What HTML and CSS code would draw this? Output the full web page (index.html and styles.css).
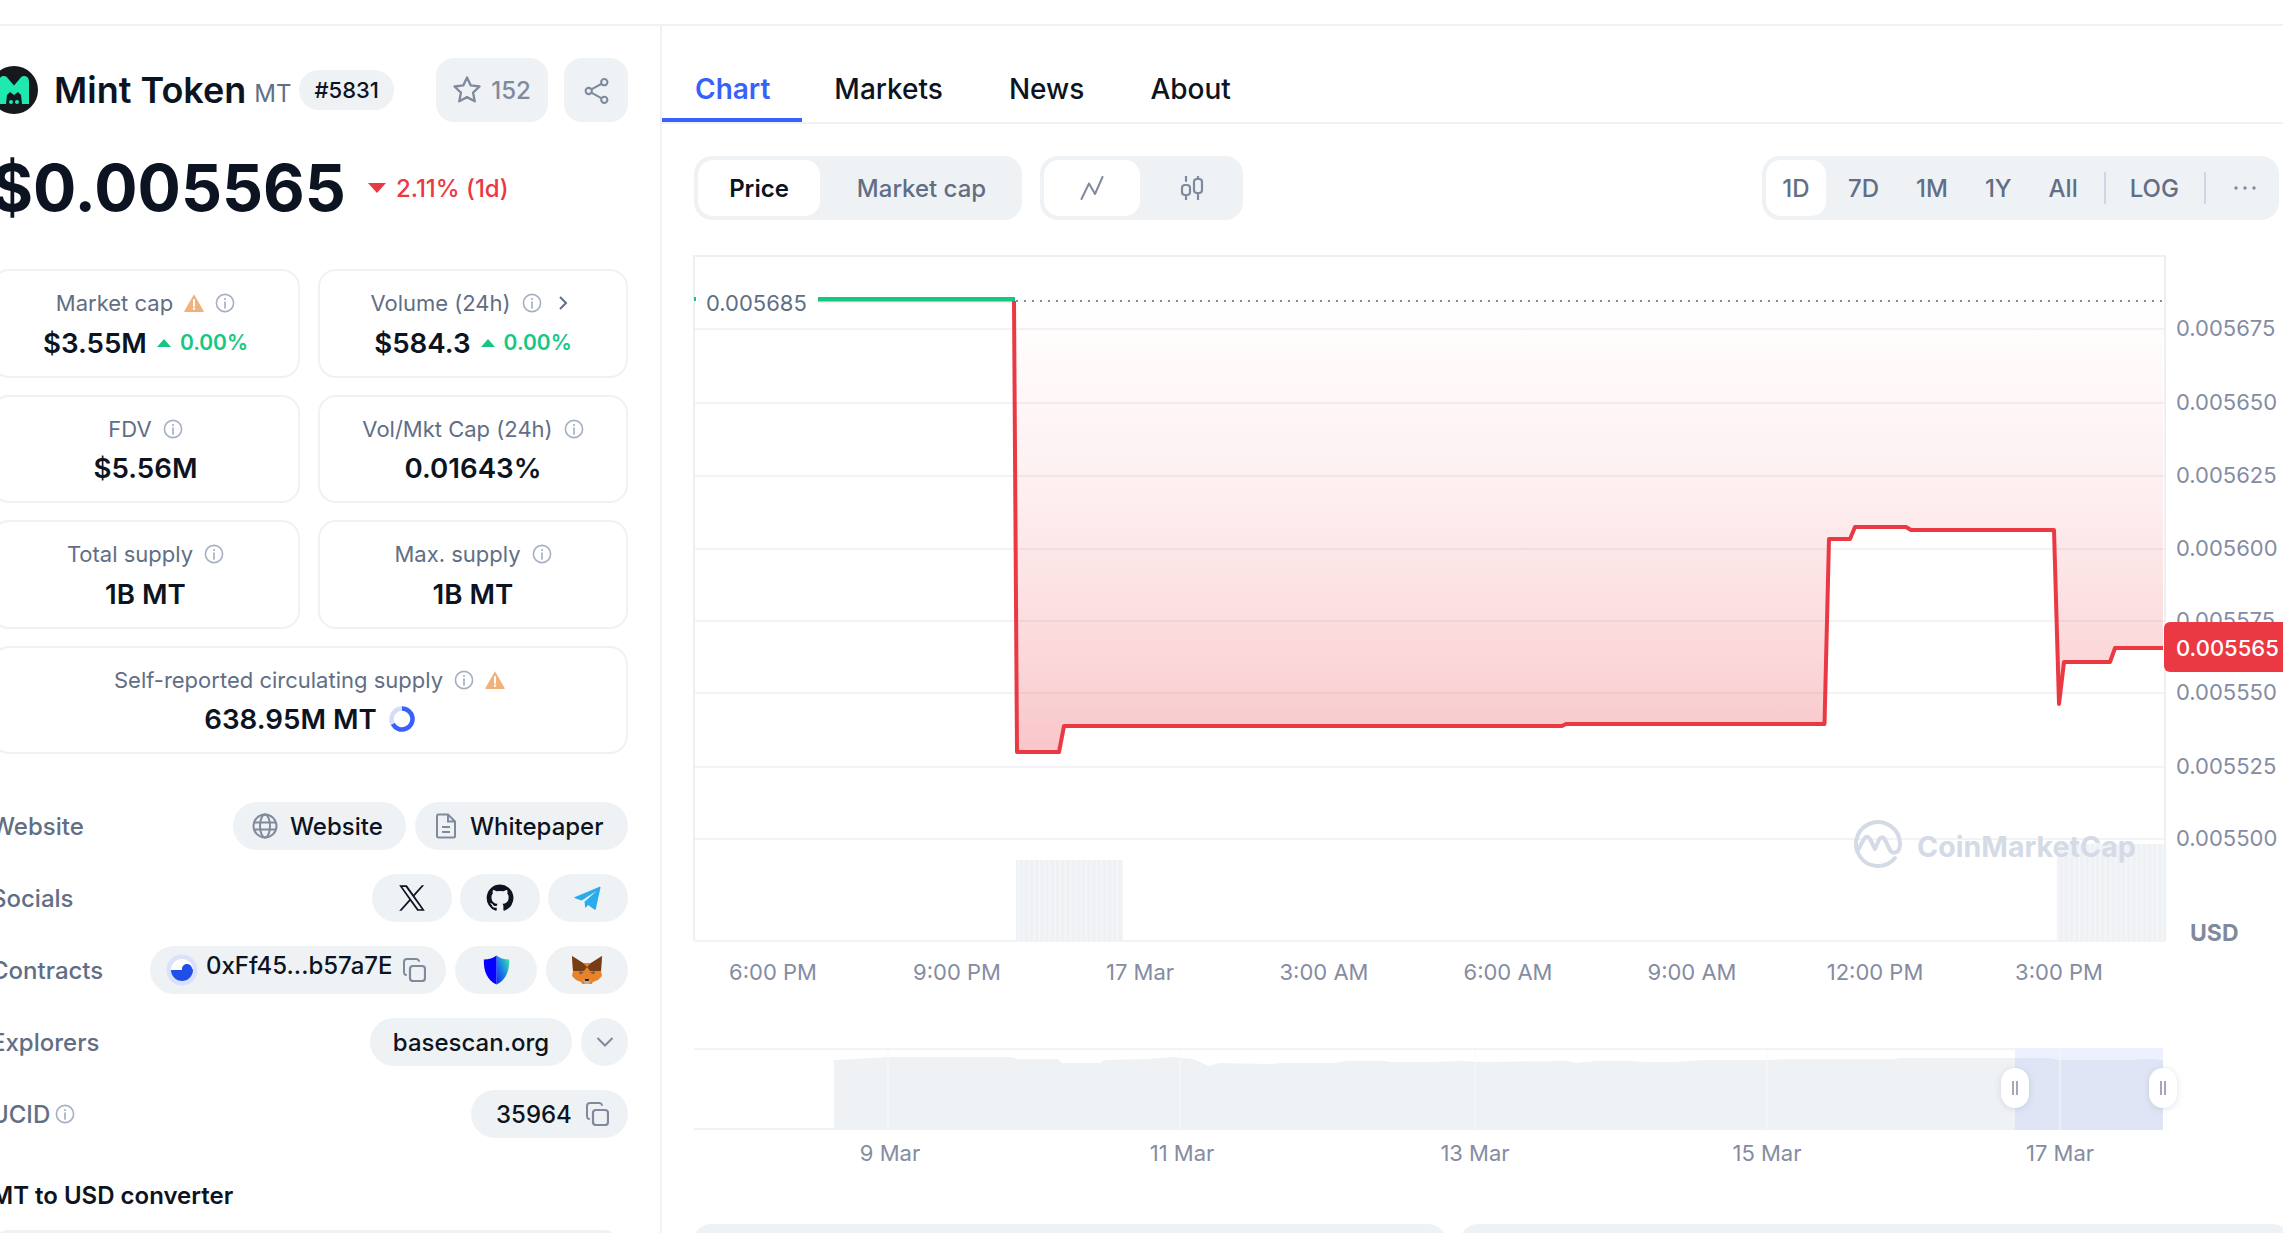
FILE: index.html
```html
<!DOCTYPE html>
<html lang="en">
<head>
<meta charset="utf-8">
<title>Mint Token</title>
<link rel="stylesheet" href="styles.css">
</head>
<body>
<svg class="defs" width="0" height="0" aria-hidden="true">
  <defs>
    <symbol id="i-info" viewBox="0 0 20 20"><circle cx="10" cy="10" r="8.6" fill="none" stroke="currentColor" stroke-width="1.6"/><circle cx="10" cy="6" r="1.1" fill="currentColor"/><path d="M10 9v6" stroke="currentColor" stroke-width="1.7" stroke-linecap="round"/></symbol>
    <symbol id="i-warn" viewBox="0 0 20 20"><path d="M10 1.2 19.6 18a.6.6 0 0 1-.5.9H.9a.6.6 0 0 1-.5-.9z" fill="#f0b27a"/><path d="M10 7v6" stroke="#fff" stroke-width="2" stroke-linecap="round"/><circle cx="10" cy="15.8" r="1.2" fill="#fff"/></symbol>
    <symbol id="i-copy" viewBox="0 0 24 24"><path d="M4 17a3 3 0 0 1-2-2.800V4a3 3 0 0 1 3-3h9a3 3 0 0 1 3 2" fill="none" stroke="currentColor" stroke-width="2" stroke-linecap="round"/><rect x="8" y="8" width="15" height="15" rx="3" fill="none" stroke="currentColor" stroke-width="2.200"/></symbol>
    <pattern id="stripes" width="5.200" height="10" patternUnits="userSpaceOnUse"><rect width="5.200" height="10" fill="#eff2f5"/><rect x="4" width="1.200" height="10" fill="#f5f7f9"/></pattern>
    <linearGradient id="redfill" gradientUnits="userSpaceOnUse" x1="0" y1="301" x2="0" y2="752"><stop offset="0" stop-color="#ea3943" stop-opacity="0"/><stop offset=".44" stop-color="#ea3943" stop-opacity=".085"/><stop offset=".71" stop-color="#ea3943" stop-opacity=".17"/><stop offset=".89" stop-color="#ea3943" stop-opacity=".24"/><stop offset="1" stop-color="#ea3943" stop-opacity=".29"/></linearGradient>
    <linearGradient id="shieldg" x1="1" y1="0" x2="0" y2="1"><stop offset=".05" stop-color="#3ae8a8"/><stop offset=".55" stop-color="#1a7be8"/><stop offset="1" stop-color="#0a2cf0"/></linearGradient>
  </defs>
</svg>

<div class="topbar"></div>
<div class="page">
  <aside class="side">
    <div class="side-inner">
      <header class="coin-head">
        <div class="coin-id">
          <svg class="coin-logo" viewBox="0 0 48 48"><circle cx="24" cy="24" r="24" fill="#15181c"/><path d="M9 16c0-4 2-6 5-6 2 0 3 1 4 2.600l6 7 6-7c1-1.600 2-2.600 4-2.600 3 0 5 2 5 6v22h-7l-1-9-3-3-4 3-4-3-3 3-1 9H9z" fill="#1de9b0"/><path d="M23 31h2.500v6H23zM18 33h2.500v5H18zM28 33h2.500v5H28z" fill="#15181c"/><circle cx="21" cy="36" r="2" fill="#1de9b0"/><circle cx="27" cy="36" r="2" fill="#1de9b0"/></svg>
          <h1 class="coin-name">Mint Token</h1>
          <span class="coin-sym">MT</span>
          <span class="coin-rank">#5831</span>
        </div>
        <div class="coin-actions">
          <button class="act act-star"><svg class="ic-star" viewBox="1 1 24 24"><path d="M13 2.200l3.200 6.900 7.500.9-5.500 5.200 1.400 7.500L13 19.100l-6.600 3.600 1.400-7.500L2.300 10l7.500-.9z" fill="none" stroke="#808a9d" stroke-width="2" stroke-linejoin="round"/></svg><span>152</span></button>
          <button class="act act-share"><svg class="ic-share" viewBox="0 0 26 26"><circle cx="20.500" cy="5" r="3" fill="none" stroke="#808a9d" stroke-width="2"/><circle cx="5.500" cy="13.500" r="3" fill="none" stroke="#808a9d" stroke-width="2"/><circle cx="20.500" cy="22" r="3" fill="none" stroke="#808a9d" stroke-width="2"/><path d="M8 12 18 6.500M8 15l10 5.500" stroke="#808a9d" stroke-width="2"/></svg></button>
        </div>
      </header>

      <div class="price-row">
        <span class="price">$0.005565</span>
        <span class="tri-down"></span>
        <span class="price-chg">2.11% (1d)</span>
      </div>

      <div class="stats">
        <div class="stat">
          <div class="stat-label">Market cap <svg class="ic-20"><use href="#i-warn"/></svg><svg class="ic-20 info"><use href="#i-info"/></svg></div>
          <div class="stat-val">$3.55M <span class="tri-up"></span><span class="up">0.00%</span></div>
        </div>
        <div class="stat">
          <div class="stat-label">Volume (24h) <svg class="ic-20 info"><use href="#i-info"/></svg><svg class="ic-chev" viewBox="0 0 10 16"><path d="M2 2l6 6-6 6" fill="none" stroke="#616e85" stroke-width="2"/></svg></div>
          <div class="stat-val">$584.3 <span class="tri-up"></span><span class="up">0.00%</span></div>
        </div>
        <div class="stat">
          <div class="stat-label">FDV <svg class="ic-20 info"><use href="#i-info"/></svg></div>
          <div class="stat-val">$5.56M</div>
        </div>
        <div class="stat">
          <div class="stat-label">Vol/Mkt Cap (24h) <svg class="ic-20 info"><use href="#i-info"/></svg></div>
          <div class="stat-val">0.01643%</div>
        </div>
        <div class="stat">
          <div class="stat-label">Total supply <svg class="ic-20 info"><use href="#i-info"/></svg></div>
          <div class="stat-val">1B MT</div>
        </div>
        <div class="stat">
          <div class="stat-label">Max. supply <svg class="ic-20 info"><use href="#i-info"/></svg></div>
          <div class="stat-val">1B MT</div>
        </div>
        <div class="stat stat-wide">
          <div class="stat-label">Self-reported circulating supply <svg class="ic-20 info"><use href="#i-info"/></svg><svg class="ic-20"><use href="#i-warn"/></svg></div>
          <div class="stat-val">638.95M MT <svg class="ring" viewBox="0 0 26 26"><circle cx="13" cy="13" r="10.500" fill="none" stroke="#d5ddf8" stroke-width="4.500"/><path d="M13 2.500A10.500 10.500 0 1 1 3.800 18" fill="none" stroke="#3861fb" stroke-width="4.500"/></svg></div>
        </div>
      </div>

      <div class="links">
        <div class="link-row">
          <span class="link-label">Website</span>
          <div class="pills">
            <span class="pill pill-site"><svg class="ic-26" viewBox="0 0 26 26"><circle cx="13" cy="13" r="11.500" fill="none" stroke="#808a9d" stroke-width="2"/><ellipse cx="13" cy="13" rx="5" ry="11.500" fill="none" stroke="#808a9d" stroke-width="2"/><path d="M2 9.500h22M2 16.500h22" stroke="#808a9d" stroke-width="2"/></svg>Website</span>
            <span class="pill pill-paper"><svg class="ic-26" viewBox="0 0 26 26"><path d="M5 1.500h10l7 7V23a1.500 1.500 0 0 1-1.500 1.500h-15A1.500 1.500 0 0 1 4 23V3a1.500 1.500 0 0 1 1-1.500zM15 1.500v7h7M9 14h8M9 19h8" fill="none" stroke="#808a9d" stroke-width="2"/></svg>Whitepaper</span>
          </div>
        </div>
        <div class="link-row">
          <span class="link-label">Socials</span>
          <div class="pills pills-tight">
            <span class="pill pill-icon pill-social"><svg class="ic-28" viewBox="0 0 24 24"><path d="M14.200 10.300 22.400 1h-2l-7.100 8.100L7.600 1H1l8.600 12.300L1 23h2l7.500-8.500 6 8.500H23zM3.700 2.500h2.900l13.800 19.100h-2.900z" fill="#0d1421"/></svg></span>
            <span class="pill pill-icon pill-social"><svg class="ic-28" viewBox="0 0 24 24"><path d="M12 .5a11.500 11.500 0 0 0-3.600 22.400c.6.100.8-.2.800-.6v-2c-3.200.7-3.900-1.500-3.900-1.500-.5-1.300-1.300-1.700-1.300-1.700-1-.7.100-.7.100-.7 1.200.1 1.800 1.200 1.800 1.200 1 1.800 2.700 1.300 3.400 1 .1-.8.400-1.300.7-1.600-2.600-.3-5.300-1.300-5.300-5.700 0-1.300.5-2.300 1.200-3.100-.1-.3-.5-1.500.1-3.100 0 0 1-.3 3.200 1.200a11 11 0 0 1 5.800 0C17.200 4.800 18.100 5.100 18.100 5.100c.6 1.600.2 2.800.1 3.100.8.800 1.200 1.900 1.200 3.100 0 4.400-2.700 5.400-5.300 5.700.4.400.8 1.100.8 2.200v3.100c0 .3.200.7.800.6A11.500 11.500 0 0 0 12 .5z" fill="#0d1421"/></svg></span>
            <span class="pill pill-icon pill-social"><svg class="ic-28" viewBox="0 0 28 28"><path d="M26.500 3.500 21.800 25c-.2.900-1 1-1.600.5l-6-4.400-3 2.800-.7-6.200L22.500 7 7.700 16.600 1 14.300c-.8-.3-.8-1 0-1.400L25 3c1-.4 1.700.2 1.500.5z" fill="#2aabee"/></svg></span>
          </div>
        </div>
        <div class="link-row">
          <span class="link-label">Contracts</span>
          <div class="pills">
            <span class="pill pill-addr"><svg class="ic-addr" viewBox="0 0 32 32"><circle cx="16" cy="16" r="15.500" fill="#d9e1fb"/><circle cx="16" cy="16" r="11" fill="#fff"/><path d="M5 16h22a11 11 0 0 1-22 0z" fill="#1f4fe8"/><path d="M16 16a5 5 0 0 1 10-2l1 2z" fill="#1f4fe8"/></svg><span class="addr-text">0xFf45...b57a7E</span><svg class="ic-copy"><use href="#i-copy"/></svg></span>
            <span class="pill pill-icon pill-shield"><svg class="ic-shield" viewBox="0 0 28 32"><path d="M14 .5c3.500 2.800 8 4.200 13.500 4.300.3 13-3.500 21.800-13.500 26.700z" fill="url(#shieldg)"/><path d="M14 .5C10.500 3.300 6 4.700.5 4.800.2 17.800 4 26.600 14 31.500z" fill="#0500ff"/></svg></span>
            <span class="pill pill-icon pill-fox"><svg class="ic-fox" viewBox="0 0 30 28"><path d="M0 0l11 7h8l11-7-1 15 1 5-4 4-5 2-2 3h-8l-2-3-5-2-4-4 1-5z" fill="#e8832b"/><path d="M0 0l11 7 4 4-3 4H3L1 15zM30 0l-11 7-4 4 3 4h9l2 0z" fill="#763d16"/><path d="M7 15l5 1.500-4 2zM23 15l-5 1.500 4 2z" fill="#7a5a3a"/><path d="M11 23h8l-2 5h-4z" fill="#c0ad9e"/><path d="M12.500 23h5l-1 2h-3z" fill="#222"/></svg></span>
          </div>
        </div>
        <div class="link-row">
          <span class="link-label">Explorers</span>
          <div class="pills">
            <span class="pill pill-scan">basescan.org</span>
            <span class="pill pill-icon pill-chev"><svg class="ic-down" viewBox="0 0 18 12"><path d="M1.500 2 9 9.500 16.500 2" fill="none" stroke="#808a9d" stroke-width="2"/></svg></span>
          </div>
        </div>
        <div class="link-row">
          <span class="link-label">UCID <svg class="ic-20 info"><use href="#i-info"/></svg></span>
          <div class="pills">
            <span class="pill pill-ucid">35964<svg class="ic-copy"><use href="#i-copy"/></svg></span>
          </div>
        </div>
      </div>

      <h2 class="conv-title">MT to USD converter</h2>
      <div class="conv-box"></div>
    </div>
  </aside>

  <main class="main">
    <nav class="tabs">
      <a class="tab tab-on">Chart</a>
      <a class="tab">Markets</a>
      <a class="tab">News</a>
      <a class="tab">About</a>
    </nav>

    <div class="controls">
      <div class="seg">
        <span class="seg-btn seg-price seg-on">Price</span>
        <span class="seg-btn seg-mcap">Market cap</span>
      </div>
      <div class="seg">
        <span class="seg-btn seg-type seg-on"><svg class="ic-type" viewBox="0 0 24 24"><path d="M1.500 23 9 7.500l6 10.500L22.500 1" fill="none" stroke="#808a9d" stroke-width="2" stroke-linecap="round" stroke-linejoin="round"/></svg></span>
        <span class="seg-btn seg-type2"><svg class="ic-type" viewBox="0 0 24 24"><path d="M6 0v5M6 19v5M18 0v3M18 17v7" stroke="#808a9d" stroke-width="2.200" stroke-linecap="round"/><rect x="2" y="9" width="8" height="10" rx="3" fill="none" stroke="#808a9d" stroke-width="2.200"/><rect x="14" y="3" width="8" height="14" rx="3" fill="none" stroke="#808a9d" stroke-width="2.200"/></svg></span>
      </div>
      <div class="seg seg-range">
        <span class="rng rng-on">1D</span>
        <span class="rng">7D</span>
        <span class="rng">1M</span>
        <span class="rng">1Y</span>
        <span class="rng">All</span>
        <span class="rng-sep"></span>
        <span class="rng">LOG</span>
        <span class="rng-sep rng-sep-b"></span>
        <span class="rng-dots"><svg class="ic-dots" viewBox="0 0 22 4"><circle cx="2" cy="2" r="1.700"/><circle cx="11" cy="2" r="1.700"/><circle cx="20" cy="2" r="1.700"/></svg></span>
      </div>
    </div>

    <svg class="chart" viewBox="662 250 1621 920" width="1621" height="920">
      <g class="grid">
        <path d="M694 329H2164M694 403H2164M694 476H2164M694 549H2164M694 621H2164M694 693H2164M694 767H2164M694 839H2164"/>
      </g>
      <path class="frame" d="M694 941V256H2165V941"/>
      <path class="base" d="M694 941H2165"/>

      <rect x="1016" y="860" width="107" height="81" fill="url(#stripes)"/>
      <rect x="2057" y="844" width="108" height="97" fill="url(#stripes)"/>

      <g class="wm">
        <path class="wm-logo" d="M1895 858a22 22 0 1 1 5-14c0 9-7 11-10 6l-5-10c-2-4-5-3-6 0l-4 9-5-10c-2-3-4-3-6 0l-6 11"/>
        <text x="1917" y="857" class="wm-text">CoinMarketCap</text>
      </g>

      <path class="area" d="M1014 301H1017V752H1059L1064 726L1562 726L1566 724H1824.500L1829 539H1850L1855 527H1906L1911 530H2054L2059 704L2064 662H2110L2115 648H2163V301Z"/>
      <path class="dots" d="M1016 301H2163"/>
      <path class="line-p" d="M818 301.500H1014"/>
      <path class="line-g" d="M694 299H696M818 299H1015"/>
      <path class="line-r" d="M1014 301L1017 752H1059L1064 726L1562 726L1566 724H1824.500L1829 539H1850L1855 527H1906L1911 530H2054L2059 704L2064 662H2110L2115 648H2163"/>

      <rect x="696" y="286" width="122" height="32" fill="#fff"/>
      <text x="706" y="311" class="lbl lbl-dark">0.005685</text>

      <g class="lbl">
        <text x="2176" y="336">0.005675</text>
        <text x="2176" y="410">0.005650</text>
        <text x="2176" y="483">0.005625</text>
        <text x="2176" y="556">0.005600</text>
        <text x="2176" y="628">0.005575</text>
        <text x="2176" y="700">0.005550</text>
        <text x="2176" y="774">0.005525</text>
        <text x="2176" y="846">0.005500</text>
      </g>
      <path class="tag" d="M2164 628a6 6 0 0 1 6-6H2283V672H2170a6 6 0 0 1-6-6Z"/>
      <text x="2176" y="656" class="lbl lbl-white">0.005565</text>
      <text x="2190" y="941" class="usd">USD</text>

      <g class="lbl lbl-mid">
        <text x="773" y="980">6:00 PM</text>
        <text x="957" y="980">9:00 PM</text>
        <text x="1140" y="980">17 Mar</text>
        <text x="1324" y="980">3:00 AM</text>
        <text x="1508" y="980">6:00 AM</text>
        <text x="1692" y="980">9:00 AM</text>
        <text x="1875" y="980">12:00 PM</text>
        <text x="2059" y="980">3:00 PM</text>
      </g>

      <path class="nav-top" d="M694 1049H2163"/>
      <path class="nav-base" d="M694 1129H834"/>
      <rect x="2015" y="1048" width="148" height="82" fill="#edf1fd"/>
      <path class="nav-area" d="M834 1130V1060L872 1058L888 1057L929 1057L1010 1057L1017 1059L1058 1059L1062 1063L1100 1063L1105 1060L1146 1059L1174 1057L1193 1059L1209 1066L1219 1063L1271 1064L1281 1063L1333 1063L1348 1061L1385 1061L1390 1062L1436 1062L1457 1061L1478 1062L1566 1061L1576 1063L1597 1061L1633 1061L1643 1062L1674 1062L1703 1060L1768 1060L1788 1059L1892 1059L1902 1058L2015 1058V1130Z"/>
      <path class="nav-sel" d="M2015 1130V1058L2047 1058L2060 1060L2128 1060L2151 1059L2163 1060V1130Z"/>
      <path class="nav-grid" d="M888 1050V1130M1180 1050V1130M1475 1050V1130M1767 1050V1130M2060 1050V1130"/>
      <g class="handle">
        <rect x="2001" y="1068" width="28" height="40" rx="14"/>
        <rect x="2149" y="1068" width="28" height="40" rx="14"/>
      </g>
      <path class="handle-bars" d="M2013 1081V1095M2017 1081V1095M2161 1081V1095M2165 1081V1095"/>
      <g class="lbl lbl-mid">
        <text x="890" y="1161">9 Mar</text>
        <text x="1182" y="1161">11 Mar</text>
        <text x="1475" y="1161">13 Mar</text>
        <text x="1767" y="1161">15 Mar</text>
        <text x="2060" y="1161">17 Mar</text>
      </g>
    </svg>

    <div class="bottom-cards">
      <div class="bcard"></div>
      <div class="bcard bcard-r"></div>
    </div>
  </main>
</div>
</body>
</html>
```
FILE: styles.css
```css
* { box-sizing: border-box; }
html, body { margin: 0; padding: 0; }
body {
  width: 2283px; height: 1233px; overflow: hidden; background: #fff;
  font-family: Inter, "Liberation Sans", sans-serif; color: #0d1421;
}
.defs { position: absolute; }
.topbar { height: 26px; border-bottom: 2px solid #eff2f5; }
.page { display: flex; height: 1207px; }

/* sidebar */
.side { flex: 0 0 662px; border-right: 2px solid #eff2f5; padding: 32px 32px 0 0; overflow: hidden; }
.side-inner { margin-left: -9px; width: 637px; }
.coin-head { display: flex; justify-content: space-between; align-items: center; height: 64px; }
.coin-id { display: flex; align-items: center; }
.coin-logo { width: 48px; height: 48px; margin-left: -1px; flex: none; }
.coin-name { margin: 0 0 0 16px; font-size: 36px; line-height: 44px; font-weight: 600; }
.coin-sym { margin: 6px 0 0 8px; font-size: 24px; color: #616e85; font-weight: 400; }
.coin-rank { margin-left: 8px; height: 40px; padding: 0 15px; line-height: 40px; border-radius: 20px; background: #eff2f5; font-size: 22px; font-weight: 500; }
.coin-actions { display: flex; gap: 16px; }
.act { border: 0; height: 64px; background: #eff2f5; border-radius: 18px; display: flex; align-items: center; justify-content: center; padding: 0; font-family: inherit; }
.act-star { width: 112px; gap: 10px; font-size: 24px; color: #808a9d; font-weight: 500; }
.act-share { width: 64px; }
.ic-star { width: 28px; height: 28px; }
.ic-share { width: 27px; height: 27px; }
.price-row { display: flex; align-items: center; margin-top: 30px; height: 72px; }
.price { font-size: 64.3px; line-height: 72px; font-weight: 700; }
.tri-down { width: 0; height: 0; margin: 0 10px 0 22px; border-left: 9px solid transparent; border-right: 9px solid transparent; border-top: 10px solid #ea3943; }
.price-chg { font-size: 24px; font-weight: 500; color: #ea3943; }
.stats { display: grid; grid-template-columns: 309px 310px; column-gap: 18px; row-gap: 17px; margin-top: 45px; }
.stat { height: 108.5px; border: 2px solid #eff2f5; border-radius: 18px; padding-top: 16px; text-align: center; }
.stat-wide { grid-column: 1 / 3; }
.stat-label { display: flex; align-items: center; justify-content: center; gap: 11px; height: 32px; font-size: 22px; color: #616e85; }
.stat-val { display: flex; align-items: center; justify-content: center; height: 36px; margin-top: 5.5px; font-size: 27.7px; font-weight: 600; white-space: pre; }
.ic-20 { width: 20px; height: 20px; flex: none; }
.info { color: #a6b0c3; }
.ic-chev { width: 10px; height: 16px; margin: 0 8px 0 5px; }
.tri-up { width: 0; height: 0; margin: 0 9px 0 3px; border-left: 7px solid transparent; border-right: 7px solid transparent; border-bottom: 8px solid #16c784; }
.up { font-size: 21px; color: #16c784; font-weight: 600; }
.ring { width: 26px; height: 26px; margin-left: 5px; }
.links { display: flex; flex-direction: column; gap: 24px; margin-top: 48px; }
.link-row { display: flex; justify-content: space-between; align-items: center; height: 48px; }
.link-label { display: flex; align-items: center; gap: 5px; font-size: 24px; font-weight: 500; color: #616e85; }
.pills { display: flex; gap: 9px; }
.pills-tight { gap: 8px; }
.pill { display: flex; align-items: center; justify-content: center; gap: 13px; height: 48px; padding: 0 18px; border-radius: 24px; background: #eff2f5; font-size: 24px; font-weight: 500; white-space: nowrap; }
.pill-icon { padding: 0; }
.pill-site { width: 173px; padding: 0 23px 0 19px; gap: 12px; justify-content: flex-start; }
.pill-paper { width: 213px; padding: 0 24px 0 18px; gap: 11px; justify-content: flex-start; }
.pill-social { width: 80px; }
.pill-shield { width: 82px; }
.pill-fox { width: 82px; }
.pill-chev { width: 47px; }
.pill-scan { width: 202px; padding: 0; }
.pill-addr { width: 296px; padding: 0 0 0 16px; gap: 0; justify-content: flex-start; }
.pill-ucid { width: 157px; padding: 0 0 0 25px; gap: 1px; justify-content: flex-start; }
.ic-26 { width: 26px; height: 26px; }
.ic-28 { width: 28px; height: 28px; }
.ic-addr { width: 32px; height: 32px; margin-right: 8px; }
.addr-text { margin-top: -10px; }
.ic-copy { width: 24px; height: 24px; margin-left: 12px; color: #808a9d; }
.pill-addr .ic-copy { margin-left: 9px; }
.ic-shield { width: 27px; height: 30px; }
.ic-fox { width: 30px; height: 28px; }
.ic-down { width: 18px; height: 12px; }
.conv-title { margin: 43px 0 0; font-size: 24px; line-height: 30px; font-weight: 600; }
.conv-box { height: 60px; margin-top: 19px; border-radius: 18px; background: #eff2f5; width: 630px; }

/* main column */
.main { flex: 1; min-width: 0; }
.tabs { display: flex; gap: 2px; height: 98px; border-bottom: 2px solid #eff2f5; }
.tab { height: 96px; padding: 45px 32px 0; line-height: 36px; font-size: 28px; font-weight: 500; border-bottom: 4px solid transparent; }
.tab-on { color: #3861fb; font-weight: 600; border-bottom-color: #3861fb; padding-left: 33px; margin-right: -2px; }
.controls { display: flex; align-items: center; gap: 18px; margin-top: 32px; padding: 0 4px 0 32px; }
.seg { display: flex; align-items: center; height: 64px; padding: 4px; border-radius: 18px; background: #eff2f5; }
.seg-btn { display: flex; align-items: center; justify-content: center; height: 56px; border-radius: 15px; font-size: 24px; font-weight: 500; color: #616e85; }
.seg-on { background: #fff; }
.seg-price { width: 122px; color: #0d1421; font-weight: 600; }
.seg-mcap { width: 198px; padding-left: 5px; }
.seg-type { width: 96px; }
.seg-type2 { width: 99px; padding-left: 4px; }
.ic-type { width: 24px; height: 24px; }
.seg-range { margin-left: auto; width: 517px; }
.rng { display: flex; align-items: center; justify-content: center; height: 56px; padding: 0 15px; border-radius: 15px; font-size: 24px; font-weight: 500; color: #616e85; margin-right: 7px; }
.rng-on { background: #fff; width: 60px; padding: 0; }
.rng-sep { width: 2px; height: 32px; background: #cfd6e4; margin: 0 9px 0 4px; }
.rng-sep-b { margin: 0 28px 0 3px; }
.rng-dots { display: flex; align-items: center; }
.ic-dots { width: 22px; height: 4px; fill: #808a9d; }

/* chart */
.chart { display: block; margin-top: 30px; }
.grid path { stroke: #f2f3f5; stroke-width: 2; fill: none; }
.frame { stroke: #eeeff1; stroke-width: 2; fill: none; }
.base { stroke: #f2f3f5; stroke-width: 2; }
.area { fill: url(#redfill); }
.dots { stroke: #858ca2; stroke-width: 2; stroke-dasharray: 2 6; fill: none; }
.line-p { stroke: #f3a9ad; stroke-width: 1.500; fill: none; }
.line-g { stroke: #16c784; stroke-width: 4; fill: none; }
.line-r { stroke: #ea3943; stroke-width: 4; fill: none; stroke-linejoin: round; }
.lbl text, .lbl-dark, .lbl-white { font-size: 22px; fill: #858ca2; font-family: Inter, "Liberation Sans", sans-serif; }
.lbl-dark { fill: #616e85; }
.lbl-white { fill: #fff; font-weight: 500; }
.lbl-mid text { text-anchor: middle; }
.tag { fill: #ea3943; }
.usd { font-size: 23px; font-weight: 700; fill: #808a9d; }
.wm-logo { fill: none; stroke: #d4dae6; stroke-width: 4; stroke-linecap: round; stroke-linejoin: round; }
.wm-text { font-size: 28.6px; font-weight: 700; fill: #d4dae6; }
.nav-top { stroke: #f2f3f5; stroke-width: 2; }
.nav-base { stroke: #eff2f5; stroke-width: 2; }
.nav-area { fill: #eff2f5; }
.nav-sel { fill: #dfe5f5; }
.nav-grid { stroke: #f7f8fa; stroke-width: 1; }
.handle rect { fill: #fff; filter: drop-shadow(0 1px 3px rgba(88,102,126,.2)); }
.handle-bars { stroke: #858ca2; stroke-width: 1.500; }
.bottom-cards { display: flex; gap: 14px; margin-top: 54px; padding-left: 31px; }
.bcard { flex: none; width: 753px; height: 60px; background: #eff2f5; border-radius: 18px 18px 0 0; }
.bcard-r { width: 830px; }
```
